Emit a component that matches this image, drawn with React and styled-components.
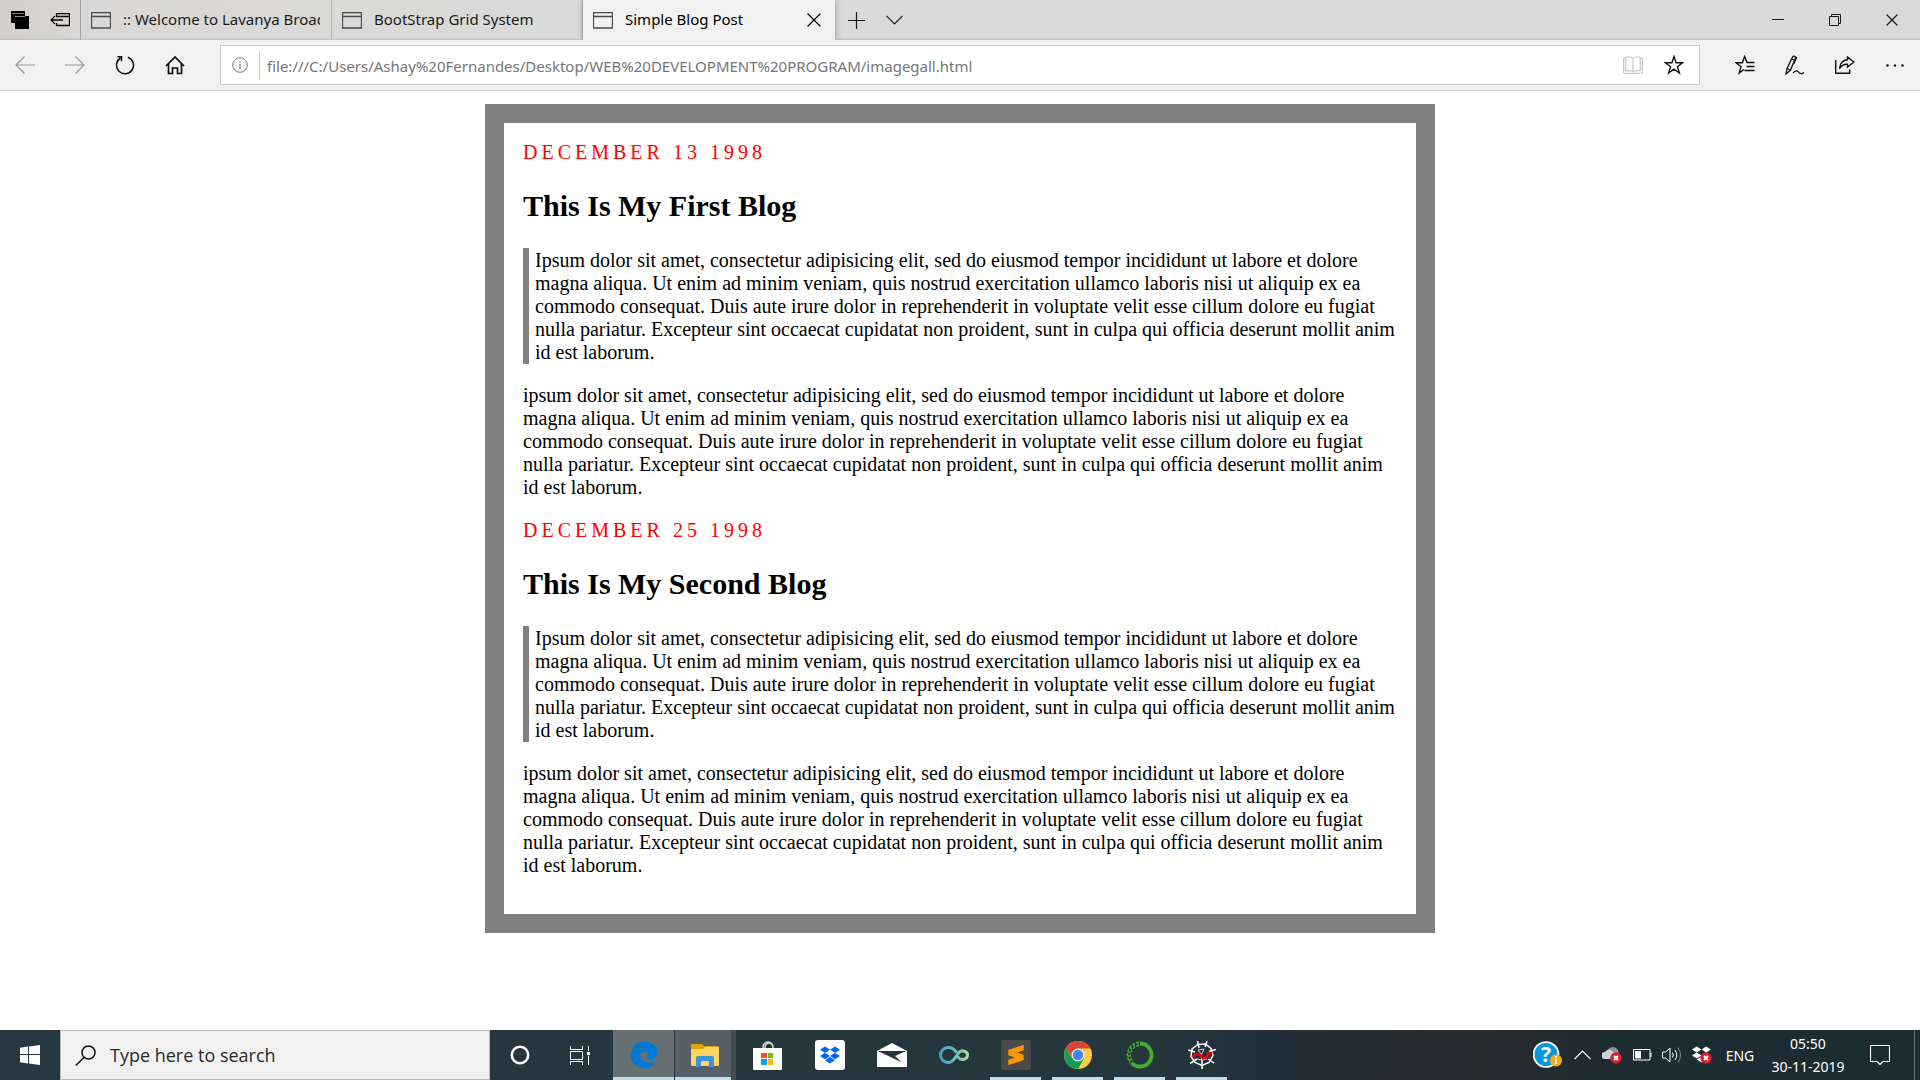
import React from "react";
import styled, { createGlobalStyle, css } from "styled-components";
import { FaEdge, FaDropbox } from "react-icons/fa";
import { SiSublimetext } from "react-icons/si";

const ui = '"Noto Sans", "Open Sans", sans-serif';

const GlobalStyle = createGlobalStyle`
  * { box-sizing: border-box; }
  body { margin: 0; background: #fff; }
  button, input { font: inherit; color: inherit; margin: 0; padding: 0; border: 0; background: none; outline: 0; }
  svg { display: block; flex: none; }
`;

const Screen = styled.div`
  min-height: 100vh;
  display: flex;
  flex-direction: column;
  font-family: ${ui};
`;

/* ---- window title bar ---- */
const TabStrip = styled.header`
  display: flex;
  height: 40px;
  background: linear-gradient(90deg, #d3cec8 0, #d9d8d6 80px, #dadada 600px, #dadada 100%);
  box-shadow: inset 0 -2px 2px -1px #bdbdbd;
  font-size: 15px;
  color: #1b1b1b;
`;

const TabTools = styled.div`
  display: flex;
  width: 81px;
  border-right: 1px solid #a3a3a3;
`;

const IconButton = styled.button`
  display: flex;
  align-items: center;
  justify-content: center;
  flex: none;
  width: ${(p) => p.$width}px;
  align-self: stretch;
`;

const TabList = styled.div`
  display: flex;
`;

const Tab = styled.div`
  display: flex;
  align-items: center;
  width: 251px;
  padding: 0 11px 0 10px;
  border-right: 1px solid #b2b2b2;
  ${(p) =>
    p.$active &&
    css`
      width: 252px;
      border-right: 0;
      background: #f1f1f1;
      color: #000;
      box-shadow: 0 0 6px #8c8c8c;
      clip-path: inset(0 -8px 0 -8px);
    `}
`;

const TabLabel = styled.button`
  display: flex;
  align-items: center;
  gap: 12px;
  flex: 1;
  min-width: 0;
  height: 100%;
  text-align: left;
`;

const TabText = styled.span`
  flex: 1;
  padding-bottom: 2px;
  overflow: hidden;
  white-space: nowrap;
`;

const Spacer = styled.div`
  flex: 1;
`;

const TabActions = styled.div`
  display: flex;
  padding-left: 2px;
`;

const WindowControls = styled.div`
  display: flex;
`;

/* ---- toolbar ---- */
const Toolbar = styled.nav`
  display: flex;
  height: 51px;
  background: #f1f1f1;
  border-bottom: 1px solid #ccc;
  color: #111;
`;

const NavButtons = styled.div`
  display: flex;
  width: 220px;
`;

const AddressBox = styled.div`
  flex: 1;
  display: flex;
  align-items: center;
  height: 40px;
  margin: 5px 20px 5px 0;
  background: #fff;
  border: 1px solid #c9c9c9;
`;

const AddressInput = styled.input`
  flex: 1;
  height: 30px;
  padding: 2px 0 0 7px;
  border-left: 1px solid #ccc;
  font-size: 15px;
  color: #767676;
`;

/* ---- blog page ---- */
const Page = styled.main`
  flex: 1;
  padding: 13px 20px;
  font-family: "Liberation Serif", serif;
  font-size: 20px;
  line-height: 23px;
  color: #000;
`;

const Blog = styled.div`
  display: flex;
  flex-direction: column;
  gap: 21px;
  max-width: 950px;
  margin: 0 auto;
  padding: 19px 19px 37px;
  border: 19px solid #808080;
`;

const PostDate = styled.div`
  line-height: 21px;
  color: #f00;
  letter-spacing: 4px;
  text-transform: uppercase;
`;

const PostTitle = styled.h2`
  margin: 26px 0 25px;
  font-size: 30px;
  line-height: 34px;
`;

const Quote = styled.blockquote`
  margin: 0 0 20px;
  padding: 1px 0 0 6px;
  border-left: 6px solid #808080;
`;

const Paragraph = styled.p`
  margin: 0;
`;

/* ---- taskbar ---- */
const Taskbar = styled.footer`
  display: flex;
  height: 50px;
  background: linear-gradient(90deg, #26373f 0, #26363d 60%, #222e38 66%, #272c2f 77%, #1e2b32 84%, #1b2c33 100%);
  color: #fff;
`;

const SearchLabel = styled.label`
  display: flex;
  align-items: center;
  gap: 14px;
  width: 430px;
  padding-left: 14px;
  background: #f1f1f1;
  border: 1px solid #bcbcbc;
`;

const SearchInput = styled.input`
  flex: 1;
  min-width: 0;
  font-family: "Open Sans", sans-serif;
  font-size: 18px;
  color: #2b2b2b;
  &::placeholder { color: #2b2b2b; opacity: 1; }
`;

const Apps = styled.div`
  display: flex;
  gap: 1px;
  padding-left: 3px;
`;

const AppButton = styled.button`
  display: flex;
  align-items: center;
  justify-content: center;
  width: 61px;
  height: 50px;
  background-color: ${(p) => p.$tone || "transparent"};
  ${(p) =>
    p.$running &&
    css`
      background-image: linear-gradient(#c3dcea, #c3dcea);
      background-repeat: no-repeat;
      background-position: center bottom;
      background-size: ${p.$tone ? "100%" : "51px"} 3px;
    `}
  ${(p) =>
    p.$stacked &&
    css`
      border-right: 5px solid #454c51;
      padding-left: 4px;
    `}
`;

const Tray = styled.div`
  display: flex;
  align-items: center;
`;

const Language = styled.button`
  width: 46px;
  margin-right: 7px;
  font-size: 14px;
`;

const Clock = styled.time`
  width: 76px;
  text-align: center;
  font-size: 14px;
  line-height: 23px;
  white-space: nowrap;
`;

const ShowDesktop = styled.button`
  width: 6px;
  height: 50px;
  border-left: 1px solid #6d777c;
`;

/* ---- drawings ---- */
function Svg({ w, h, children, ...rest }) {
  return (
    <svg width={w} height={h} viewBox={`0 0 ${w} ${h}`} fill="none" stroke="currentColor" aria-hidden="true" {...rest}>
      {children}
    </svg>
  );
}

const TabsAside = () => (
  <Svg w={18} h={18} stroke="none">
    <path d="M0 0h14v12H0z" fill="#000" />
    <path d="M1 2h12v1H1z" fill="#777" />
    <path d="M4 5h14v13H4z" fill="#000" />
    <path d="M4 5h10v1H4z" fill="#888" />
  </Svg>
);
const SetAside = () => (
  <Svg w={20} h={14} stroke="#000">
    <path d="M6.500 4V.5h13v12h-13V10M6 3.500h13.500M1 7h12M5 3L1 7l4 4" strokeWidth="1.300" />
  </Svg>
);
const PageIcon = () => (
  <Svg w={20} h={17} stroke="#4a4a4a">
    <path d="M.5.500h19v15.500H.5zM.5 4.500h19" strokeWidth="1.300" />
  </Svg>
);
const Cross = ({ size }) => (
  <Svg w={size} h={size}>
    <path d={`M.5.500l${size - 1} ${size - 1}M${size - 0.5}.5L.5 ${size - 0.5}`} strokeWidth="1.200" />
  </Svg>
);
const Plus = () => (
  <Svg w={17} h={17}><path d="M8.500 0v17M0 8.500h17" strokeWidth="1.200" /></Svg>
);
const Chevron = ({ up }) => (
  <Svg w={17} h={10}><path d={up ? "M.5 9.200l8-8 8 8" : "M.5.800l8 8 8-8"} strokeWidth="1.200" /></Svg>
);
const Minimize = () => <Svg w={12} h={2}><path d="M0 .5h12" /></Svg>;
const Restore = () => (
  <Svg w={12} h={12}><path d="M.5 2.500h9v9h-9zM2.500 2.500v-2h9v9h-2" /></Svg>
);
const Back = () => (
  <Svg w={20} h={18} stroke="#9b9b9b"><path d="M20 9H1M9.500.5L1 9l8.500 8.500" strokeWidth="1.200" /></Svg>
);
const Forward = () => (
  <Svg w={20} h={18} stroke="#9b9b9b"><path d="M0 9h19M10.500.500L19 9l-8.500 8.500" strokeWidth="1.200" /></Svg>
);
const Refresh = () => (
  <Svg w={20} h={20}>
    <path d="M12.800 2.200a8.500 8.500 0 1 1-7.300.8M2.500 1.700h4v4.500" strokeWidth="1.500" />
  </Svg>
);
const HomeIcon = () => (
  <Svg w={20} h={20}>
    <path d="M1 11L10 2l9 9M3.500 9v9.500h4V13h5v5.500h4V9" strokeWidth="1.700" />
  </Svg>
);
const InfoIcon = () => (
  <Svg w={16} h={16} stroke="#777"><circle cx="8" cy="8" r="7.300" /><path d="M8 6.800V12M8 4v1.500" strokeWidth="1.200" /></Svg>
);
const Book = () => (
  <Svg w={20} h={18} stroke="#bdbdbd">
    <path d="M2.500 2H.700v15.300h18.600V2h-1.800" />
    <path d="M10 2.500C8.500.800 5 .500 2.800 1.200V15c2.500-.7 5.700-.3 7.200 1 1.500-1.300 4.700-1.700 7.200-1V1.200C15 .500 11.500.800 10 2.500zV16" />
  </Svg>
);
const Star = () => (
  <Svg w={20} h={20}>
    <path d="M10 1.500l2.100 6.200h6.500l-5.200 4 2 6.300-5.400-3.900L4.600 18l2-6.300-5.200-4h6.500z" strokeWidth="1.400" />
  </Svg>
);
const Favorites = () => (
  <Svg w={20} h={20}>
    <path d="M19.500 7.500h-7.400L9.600 1.500 7.400 7.700H1l5 4-1.800 6.200L9 14.500M11.500 11.500h8M9.500 15.500h10" strokeWidth="1.400" />
  </Svg>
);
const Pen = () => (
  <Svg w={20} h={20}>
    <path d="M1 19l1-5.500L7.500 2c1-1.500 3.500-.5 3 1.300L5.500 15 1 19zM6.500 4l3.500 1.500M9.500 1.500l2 1-2.500 6M2 13.500L5.300 15M8 18c2.500-3 4.500-2.500 5.500-1s3 2.500 5.500.5" strokeWidth="1.300" />
  </Svg>
);
const Share = () => (
  <Svg w={20} h={18}>
    <path d="M.7 4v13.300h14V13.500M12.500 1L19 6l-6.500 5V8.300C8.500 8 6.500 9.500 4.500 12.500 5 7.500 7.500 4.200 12.500 3.800z" strokeWidth="1.400" />
  </Svg>
);
const Dots = () => (
  <Svg w={18} h={3} fill="currentColor" stroke="none">
    <circle cx="1.500" cy="1.500" r="1.200" /><circle cx="9" cy="1.500" r="1.200" /><circle cx="16.500" cy="1.500" r="1.200" />
  </Svg>
);
const WindowsLogo = () => (
  <Svg w={20} h={20} fill="#fff" stroke="none">
    <path d="M0 2.800L8 1.600V9H0zM9 1.500L20 0v9H9zM0 10h8v8.400L0 17.300zM9 10h11v10L9 18.500z" />
  </Svg>
);
const SearchIcon = () => (
  <Svg w={21} h={21} stroke="#111"><circle cx="13.500" cy="7.500" r="6.500" strokeWidth="1.500" /><path d="M9 12.500L.7 20.500" strokeWidth="1.500" /></Svg>
);
const Cortana = () => <Svg w={20} h={20}><circle cx="10" cy="10" r="8.200" strokeWidth="2.500" /></Svg>;
const TaskView = () => (
  <Svg w={20} h={19}>
    <path d="M.5 0v3.500h12V0M.5 19v-3.500h12V19M.5 5.500h12v8H.5zM18.500 0v5M18.500 9.500V19" />
    <path d="M17 6h3v3h-3z" fill="#fff" stroke="none" />
  </Svg>
);
const Folder = () => (
  <Svg w={28} h={23} stroke="none">
    <path d="M0 1q0-1 1-1h10l2 2h13q2 0 2 2v17H0z" fill="#dfa30c" />
    <path d="M0 5h12l2-2h14v18q0 1-1 1H1q-1 0-1-1z" fill="#ffd461" />
    <path d="M5 23v-9q0-2 2-2h14q2 0 2 2v9h-5v-6h-8v6z" fill="#3a93dc" />
  </Svg>
);
const Store = () => (
  <Svg w={29} h={29}>
    <path d="M10 8V6a5 5 0 0 1 10 0v2M12 8V5.500a4 4 0 0 1 7-2" strokeWidth="1.500" stroke="#d4d8da" />
    <path d="M0 7h29v21q0 1-1 1H1q-1 0-1-1z" fill="#fff" stroke="none" />
    <g stroke="none">
      <path d="M8 12h6v5H8z" fill="#f25022" /><path d="M15 12h5v5h-5z" fill="#7fba00" />
      <path d="M8 18h6v6H8z" fill="#00a4ef" /><path d="M15 18h5v6h-5z" fill="#ffb900" />
    </g>
  </Svg>
);
const DropboxTile = () => (
  <Svg w={30} h={30} stroke="none">
    <rect width="30" height="30" rx="3" fill="#fff" />
    <FaDropbox x="5" y="5" size={20} color="#0061fe" />
  </Svg>
);
const Mail = () => (
  <Svg w={30} h={24} stroke="none">
    <path d="M0 8L15 0l15 8v16H0z" fill="#fff" />
    <path d="M1 8h28l-11 5 7 6.500z" fill="#25353d" />
  </Svg>
);
const Infinity8 = () => (
  <Svg w={30} h={18}>
    <defs>
      <linearGradient id="loop" x1="0" y1="0" x2="30" y2="0" gradientUnits="userSpaceOnUse">
        <stop offset="0" stopColor="#369fc4" /><stop offset=".5" stopColor="#62bdc0" /><stop offset="1" stopColor="#a9df96" />
      </linearGradient>
    </defs>
    <path d="M17.500 6.500C15.500 3 13 1.500 9 1.500a7.500 7.500 0 0 0 0 15c7 0 7.500-8 12-11 3-1.500 7.500 0 7.500 3.500s-4 5.500-7.500 3.800c-1.500-.8-2.500-2-3.500-4" stroke="url(#loop)" strokeWidth="3" />
  </Svg>
);
const SublimeTile = () => (
  <Svg w={30} h={30} stroke="none">
    <rect width="30" height="30" rx="2" fill="#4b4a4b" />
    <SiSublimetext x="5" y="5" size={20} color="#ff9800" />
  </Svg>
);
const ChromeLogo = () => (
  <Svg w={28} h={28} stroke="none">
    <circle cx="14" cy="14" r="14" fill="#ffcd40" />
    <path d="M14 7.500h12.400A14 14 0 0 0 1.900 7L8 17z" fill="#db4437" />
    <path d="M1.900 7A14 14 0 0 0 14 28l6-10.500L14 14 8 17.500z" fill="#0f9d58" />
    <circle cx="14" cy="14" r="6.500" fill="#f1f1f1" />
    <circle cx="14" cy="14" r="5.200" fill="#4285f4" />
  </Svg>
);
const Anaconda = () => (
  <Svg w={28} h={28} stroke="#43b02a">
    <path d="M14 2.500a11.500 11.500 0 1 1-8.500 19.200" strokeWidth="3.800" />
    <path d="M13 1.200A12.700 12.700 0 0 0 4 21.500M13 4.500A9.700 9.700 0 0 0 6 19.500" strokeWidth="1.300" strokeDasharray="3 1.200" />
    <path d="M12.500 3A11.500 11.500 0 0 0 4.500 20.500" strokeWidth="2.200" strokeDasharray="1.500 2.500" />
  </Svg>
);
const Spyder = () => (
  <Svg w={28} h={28}>
    <path d="M10 3.500l7.500-.5 5.500 4.500 2 7-4 7-7 3-7-3-4-6 1-7.500z" strokeWidth="1.500" />
    <path d="M11 7L9.500 0M17 6L19 0M21 10.500l7-2M20 18l6 4M14 19v9M9 18l-7 4.500M7 11L0 9" strokeWidth="1.500" />
    <path d="M10 9l6-1M13.500 13.500L16 8M10 9l3.500 4.500V19M9 18l5 1 5-1" stroke="#c9ced0" />
    <path d="M4.500 16c3.500-4 6-3.500 9-.5s5.500 2 7-3.500h4" stroke="#f00000" strokeWidth="2.600" />
  </Svg>
);
const Help = () => (
  <Svg w={29} h={28} stroke="none">
    <circle cx="13" cy="13.500" r="13.300" fill="#fff" /><circle cx="13" cy="13.500" r="11.500" fill="#0799d9" />
    <text x="13" y="21" textAnchor="middle" fontFamily="Open Sans" fontSize="21" fontWeight="700" fill="#fff">?</text>
    <circle cx="23" cy="19.500" r="6" fill="#f5ad1c" />
    <path d="M23 18v5M23 15v2" stroke="#fff" strokeWidth="2" />
  </Svg>
);
const ErrorBadge = ({ x, y }) => (
  <g stroke="none">
    <circle cx={x} cy={y} r="5.700" fill="#d9202c" />
    <path d={`M${x - 2} ${y - 2}l4 4M${x + 2} ${y - 2}l-4 4`} stroke="#fff" strokeWidth="1.800" />
  </g>
);
const Cloud = () => (
  <Svg w={20} h={18} stroke="none">
    <path d="M5 6a6 6 0 0 1 11-2q1 2 0 6H5z" fill="#8c9194" />
    <path d="M3 13a3.500 3.500 0 0 1 0-7c3-4 7-2 8 0l5 3v4z" fill="#cfd1d2" />
    <ErrorBadge x={14} y={12} />
  </Svg>
);
const Battery = () => (
  <Svg w={19} h={12}>
    <path d="M.5.500h16.500v10.500H.5zM18 3.500v4.500" /><path d="M2 2h6v7.500H2z" fill="#fff" stroke="none" />
  </Svg>
);
const Speaker = () => (
  <Svg w={20} h={18}>
    <path d="M.5 6h3L8 2v14l-4.500-4h-3zM10.500 6.500q1.500 2.500 0 5M13 4q3.500 5 0 10" />
    <path d="M16 1.500q5 7.500 0 15" stroke="#7f898e" />
  </Svg>
);
const DropboxTray = () => (
  <Svg w={20} h={18} stroke="none">
    <FaDropbox x="0" y="-1" size={19} color="#fff" /><ErrorBadge x={14} y={12} />
  </Svg>
);
const Notifications = () => (
  <Svg w={20} h={20}><path d="M.5.500h19v16h-6.500l-3 3-3-3H.5z" strokeWidth="1.200" /></Svg>
);

const tabs = [
  { title: ":: Welcome to Lavanya Broad" },
  { title: "BootStrap Grid System" },
  { title: "Simple Blog Post", active: true },
];

const lorem =
  "psum dolor sit amet, consectetur adipisicing elit, sed do eiusmod tempor incididunt ut labore et dolore magna aliqua. Ut enim ad minim veniam, quis nostrud exercitation ullamco laboris nisi ut aliquip ex ea commodo consequat. Duis aute irure dolor in reprehenderit in voluptate velit esse cillum dolore eu fugiat nulla pariatur. Excepteur sint occaecat cupidatat non proident, sunt in culpa qui officia deserunt mollit anim id est laborum.";

const posts = [
  { date: "December 13 1998", title: "This Is My First Blog" },
  { date: "December 25 1998", title: "This Is My Second Blog" },
];

const apps = [
  { name: "Microsoft Edge", icon: <FaEdge size={28} color="#0078d7" />, running: true, tone: "#667072" },
  { name: "File Explorer", icon: <Folder />, running: true, tone: "#566066", stacked: true },
  { name: "Microsoft Store", icon: <Store /> },
  { name: "Dropbox", icon: <DropboxTile /> },
  { name: "Mail", icon: <Mail /> },
  { name: "Loop", icon: <Infinity8 /> },
  { name: "Sublime Text", icon: <SublimeTile />, running: true },
  { name: "Chrome", icon: <ChromeLogo />, running: true },
  { name: "Anaconda", icon: <Anaconda />, running: true },
  { name: "Spyder", icon: <Spyder />, running: true },
];

export default function App() {
  return (
    <Screen>
      <GlobalStyle />
      <TabStrip>
        <TabTools>
          <IconButton $width={40} aria-label="Tabs set aside"><TabsAside /></IconButton>
          <IconButton $width={40} aria-label="Set tabs aside"><SetAside /></IconButton>
        </TabTools>
        <TabList>
          {tabs.map((t) => (
            <Tab key={t.title} $active={t.active}>
              <TabLabel><PageIcon /><TabText>{t.title}</TabText></TabLabel>
              {t.active && <IconButton $width={20} aria-label="Close tab"><Cross size={14} /></IconButton>}
            </Tab>
          ))}
        </TabList>
        <TabActions>
          <IconButton $width={38} aria-label="New tab"><Plus /></IconButton>
          <IconButton $width={38} aria-label="Tab previews"><Chevron /></IconButton>
        </TabActions>
        <Spacer />
        <WindowControls>
          <IconButton $width={57} aria-label="Minimize"><Minimize /></IconButton>
          <IconButton $width={57} aria-label="Restore"><Restore /></IconButton>
          <IconButton $width={57} aria-label="Close"><Cross size={12} /></IconButton>
        </WindowControls>
      </TabStrip>

      <Toolbar>
        <NavButtons>
          <IconButton $width={50} aria-label="Back"><Back /></IconButton>
          <IconButton $width={50} aria-label="Forward"><Forward /></IconButton>
          <IconButton $width={50} aria-label="Refresh"><Refresh /></IconButton>
          <IconButton $width={50} aria-label="Home"><HomeIcon /></IconButton>
        </NavButtons>
        <AddressBox>
          <IconButton $width={38} aria-label="Site information"><InfoIcon /></IconButton>
          <AddressInput
            type="text"
            aria-label="Address"
            spellCheck={false}
            defaultValue="file:///C:/Users/Ashay%20Fernandes/Desktop/WEB%20DEVELOPMENT%20PROGRAM/imagegall.html"
          />
          <IconButton $width={32} aria-label="Reading view"><Book /></IconButton>
          <IconButton $width={50} aria-label="Add to favorites"><Star /></IconButton>
        </AddressBox>
        <IconButton $width={50} aria-label="Favorites"><Favorites /></IconButton>
        <IconButton $width={50} aria-label="Add notes"><Pen /></IconButton>
        <IconButton $width={50} aria-label="Share"><Share /></IconButton>
        <IconButton $width={50} aria-label="More"><Dots /></IconButton>
      </Toolbar>

      <Page>
        <Blog>
          {posts.map((p) => (
            <article key={p.date}>
              <PostDate>{p.date}</PostDate>
              <PostTitle>{p.title}</PostTitle>
              <Quote>{`I${lorem}`}</Quote>
              <Paragraph>{`i${lorem}`}</Paragraph>
            </article>
          ))}
        </Blog>
      </Page>

      <Taskbar>
        <IconButton $width={60} aria-label="Start"><WindowsLogo /></IconButton>
        <SearchLabel>
          <SearchIcon />
          <SearchInput type="text" aria-label="Search" placeholder="Type here to search" />
        </SearchLabel>
        <IconButton $width={60} aria-label="Cortana"><Cortana /></IconButton>
        <IconButton $width={60} aria-label="Task view"><TaskView /></IconButton>
        <Apps>
          {apps.map((a) => (
            <AppButton key={a.name} aria-label={a.name} $running={a.running} $tone={a.tone} $stacked={a.stacked}>
              {a.icon}
            </AppButton>
          ))}
        </Apps>
        <Spacer />
        <Tray>
          <IconButton $width={40} aria-label="Help"><Help /></IconButton>
          <IconButton $width={30} aria-label="Show hidden icons"><Chevron up /></IconButton>
          <IconButton $width={30} aria-label="OneDrive"><Cloud /></IconButton>
          <IconButton $width={30} aria-label="Battery"><Battery /></IconButton>
          <IconButton $width={30} aria-label="Volume"><Speaker /></IconButton>
          <IconButton $width={30} aria-label="Dropbox status"><DropboxTray /></IconButton>
          <Language>ENG</Language>
          <Clock dateTime="2019-11-30T05:50">05:50<br />30-11-2019</Clock>
          <IconButton $width={68} aria-label="Notifications"><Notifications /></IconButton>
          <ShowDesktop aria-label="Show desktop" />
        </Tray>
      </Taskbar>
    </Screen>
  );
}
